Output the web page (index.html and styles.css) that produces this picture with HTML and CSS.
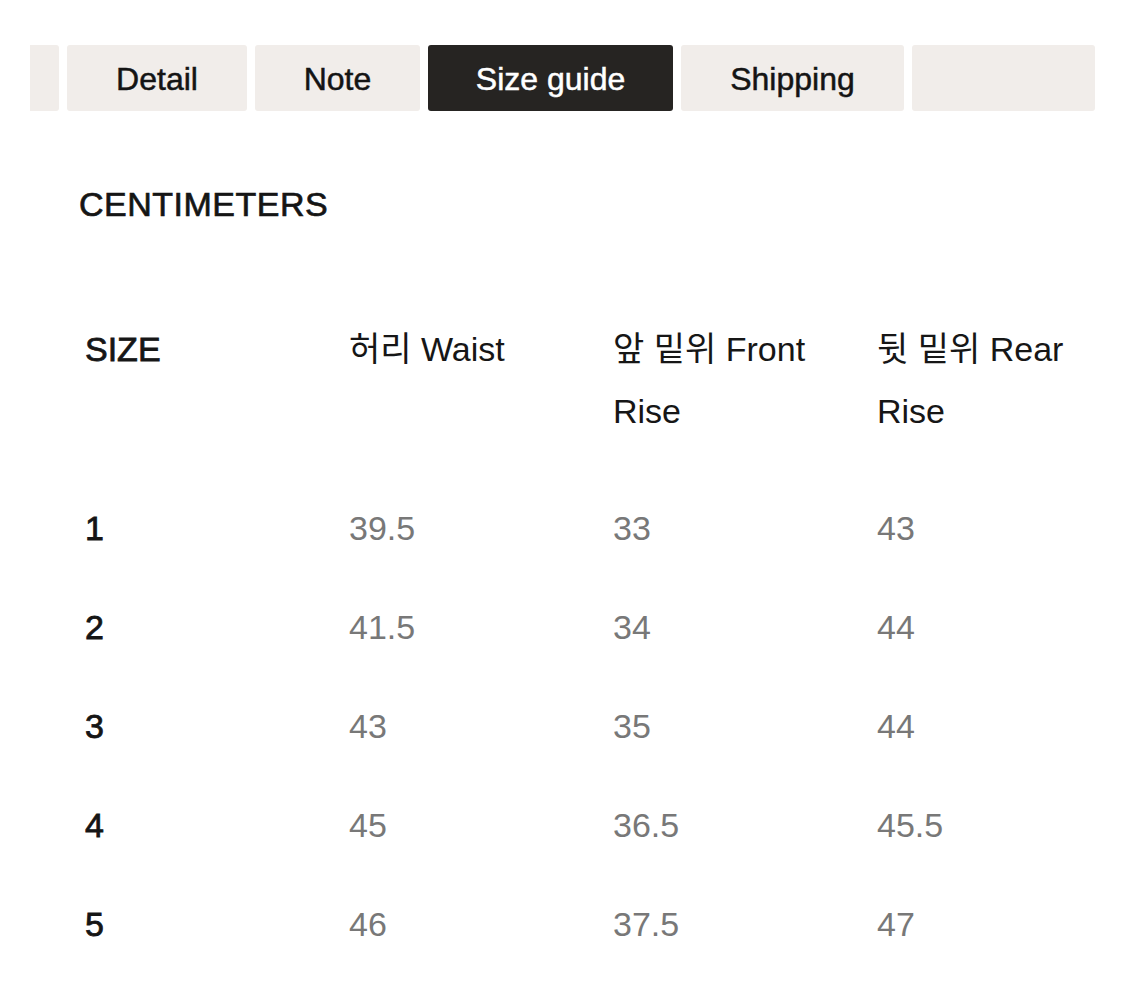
FILE: index.html
```html
<!DOCTYPE html>
<html lang="ko">
<head>
<meta charset="utf-8">
<title>Size guide</title>
<link rel="stylesheet" href="styles.css">
</head>
<body>
<nav class="tabs">
  <div class="tab tab-edge"></div>
  <div class="tab tab-detail">Detail</div>
  <div class="tab tab-note">Note</div>
  <div class="tab tab-size active">Size guide</div>
  <div class="tab tab-ship">Shipping</div>
  <div class="tab tab-last"></div>
</nav>
<section class="guide">
  <h2 class="unit">CENTIMETERS</h2>
  <table class="sizes">
    <colgroup>
      <col class="c1"><col class="c2"><col class="c3"><col class="c4">
    </colgroup>
    <thead>
      <tr>
        <th class="size-head">SIZE</th>
        <th>허리 Waist</th>
        <th>앞 밑위 Front Rise</th>
        <th>뒷 밑위 Rear Rise</th>
      </tr>
    </thead>
    <tbody>
      <tr><td class="num">1</td><td>39.5</td><td>33</td><td>43</td></tr>
      <tr><td class="num">2</td><td>41.5</td><td>34</td><td>44</td></tr>
      <tr><td class="num">3</td><td>43</td><td>35</td><td>44</td></tr>
      <tr><td class="num">4</td><td>45</td><td>36.5</td><td>45.5</td></tr>
      <tr><td class="num">5</td><td>46</td><td>37.5</td><td>47</td></tr>
    </tbody>
  </table>
</section>
</body>
</html>
```
FILE: styles.css
```css
html, body {
  margin: 0;
  padding: 0;
  background: #ffffff;
}
body {
  font-family: "Liberation Sans", "Noto Sans CJK KR", Arial, sans-serif;
  color: #151515;
  width: 1125px;
  overflow: hidden;
}
.tabs {
  display: flex;
  gap: 8px;
  margin-top: 45px;
  padding-left: 30px;
}
.tab {
  height: 66px;
  background: #f1edea;
  border-radius: 3px;
  display: flex;
  align-items: center;
  justify-content: center;
  padding-top: 2px;
  box-sizing: border-box;
  font-size: 32px;
  color: #141414;
  -webkit-text-stroke: 0.5px #141414;
  flex: none;
}
.tab-edge { width: 29px; border-radius: 0 3px 3px 0; }
.tab-detail { width: 180px; }
.tab-note { width: 165px; }
.tab-size { width: 245px; }
.tab-ship { width: 223px; }
.tab-last { width: 183px; }
.tab.active {
  background: #262422;
  color: #ffffff;
  -webkit-text-stroke: 0.5px #ffffff;
}
.guide {
  padding-left: 79px;
}
.unit {
  margin: 73px 0 0 0;
  font-size: 34px;
  line-height: 40px;
  font-weight: 400;
  letter-spacing: 0.5px;
  -webkit-text-stroke: 0.7px #151515;
  color: #151515;
}
.sizes {
  margin-top: 94px;
  border-collapse: collapse;
  table-layout: fixed;
  width: 1056px;
}
.sizes col { width: 264px; }
.sizes th {
  text-align: left;
  vertical-align: top;
  font-weight: 400;
  font-size: 34px;
  line-height: 62px;
  padding: 0 34px 36px 6px;
  color: #161616;
}
.sizes th.size-head {
  -webkit-text-stroke: 0.8px #161616;
}
.sizes td {
  height: 99px;
  padding: 0 6px;
  vertical-align: middle;
  font-size: 34px;
  line-height: 40px;
  color: #787878;
}
.sizes td.num {
  color: #151515;
  -webkit-text-stroke: 0.8px #151515;
}
```
